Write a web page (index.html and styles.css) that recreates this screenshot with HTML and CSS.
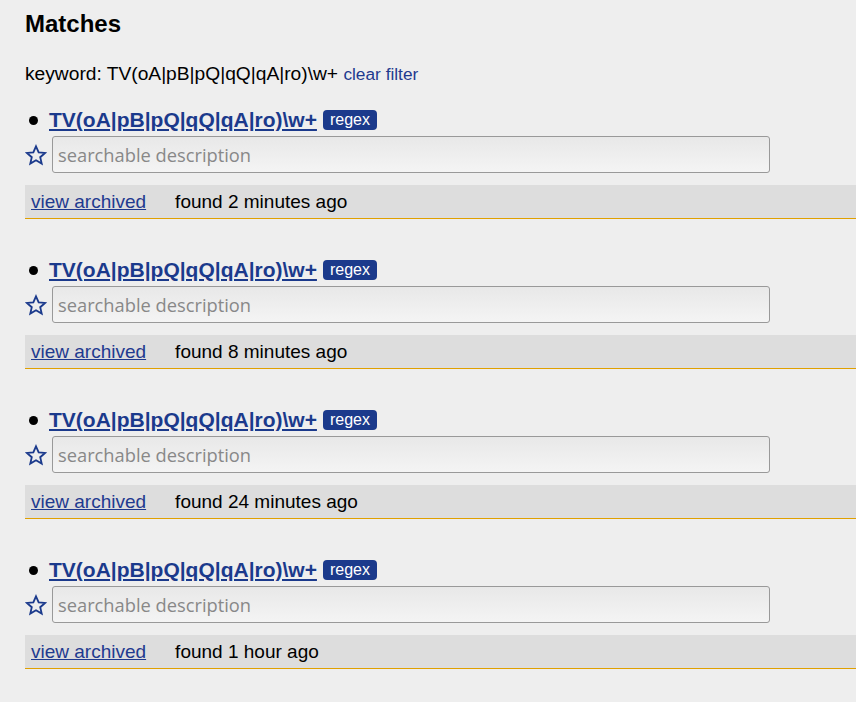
FILE: index.html
```html
<!DOCTYPE html>
<html>
<head>
<meta charset="utf-8">
<link rel="stylesheet" href="styles.css">
</head>
<body>
<div class="page">
  <h1 class="title">Matches</h1>
  <p class="filter">keyword: TV(oA|pB|pQ|qQ|qA|ro)\w+ <a class="clear" href="#">clear filter</a></p>

  <div class="match">
    <div class="head"><span class="dot"></span><a class="name" href="#">TV(oA|pB|pQ|qQ|qA|ro)\w+</a><span class="badge">regex</span></div>
    <div class="desc-row">
      <svg class="star" viewBox="0 0 24 24" width="22" height="22"><path d="M12 2.5l2.9 6.6 7.1.6-5.4 4.7 1.6 7-6.2-3.7-6.2 3.7 1.6-7L2 9.7l7.1-.6z" fill="none" stroke="#1b3a8c" stroke-width="2" stroke-linejoin="miter"/></svg>
      <input class="desc" type="text" placeholder="searchable description">
    </div>
    <div class="bar"><a class="archived" href="#">view archived</a><span class="found">found 2 minutes ago</span></div>
  </div>

  <div class="match">
    <div class="head"><span class="dot"></span><a class="name" href="#">TV(oA|pB|pQ|qQ|qA|ro)\w+</a><span class="badge">regex</span></div>
    <div class="desc-row">
      <svg class="star" viewBox="0 0 24 24" width="22" height="22"><path d="M12 2.5l2.9 6.6 7.1.6-5.4 4.7 1.6 7-6.2-3.7-6.2 3.7 1.6-7L2 9.7l7.1-.6z" fill="none" stroke="#1b3a8c" stroke-width="2" stroke-linejoin="miter"/></svg>
      <input class="desc" type="text" placeholder="searchable description">
    </div>
    <div class="bar"><a class="archived" href="#">view archived</a><span class="found">found 8 minutes ago</span></div>
  </div>

  <div class="match">
    <div class="head"><span class="dot"></span><a class="name" href="#">TV(oA|pB|pQ|qQ|qA|ro)\w+</a><span class="badge">regex</span></div>
    <div class="desc-row">
      <svg class="star" viewBox="0 0 24 24" width="22" height="22"><path d="M12 2.5l2.9 6.6 7.1.6-5.4 4.7 1.6 7-6.2-3.7-6.2 3.7 1.6-7L2 9.7l7.1-.6z" fill="none" stroke="#1b3a8c" stroke-width="2" stroke-linejoin="miter"/></svg>
      <input class="desc" type="text" placeholder="searchable description">
    </div>
    <div class="bar"><a class="archived" href="#">view archived</a><span class="found">found 24 minutes ago</span></div>
  </div>

  <div class="match">
    <div class="head"><span class="dot"></span><a class="name" href="#">TV(oA|pB|pQ|qQ|qA|ro)\w+</a><span class="badge">regex</span></div>
    <div class="desc-row">
      <svg class="star" viewBox="0 0 24 24" width="22" height="22"><path d="M12 2.5l2.9 6.6 7.1.6-5.4 4.7 1.6 7-6.2-3.7-6.2 3.7 1.6-7L2 9.7l7.1-.6z" fill="none" stroke="#1b3a8c" stroke-width="2" stroke-linejoin="miter"/></svg>
      <input class="desc" type="text" placeholder="searchable description">
    </div>
    <div class="bar"><a class="archived" href="#">view archived</a><span class="found">found 1 hour ago</span></div>
  </div>
</div>
</body>
</html>
```

FILE: styles.css
```css
html, body {
  margin: 0;
  padding: 0;
  background: #eeeeee;
}
body {
  font-family: "Liberation Sans", Arial, sans-serif;
  color: #000;
}
.page {
  padding: 10px 0 0 25px;
}
.title {
  margin: 0;
  font-size: 24px;
  font-weight: bold;
  line-height: 28px;
}
.filter {
  margin: 25px 0 0 0;
  font-size: 19.2px;
  line-height: 22px;
}
.clear {
  color: #1f3a8f;
  text-decoration: none;
  font-size: 17.3px;
}
.match {
  margin-top: 22px;
  margin-bottom: 38px;
}
.head {
  display: flex;
  align-items: center;
  height: 26px;
}
.dot {
  width: 9px;
  height: 9px;
  border-radius: 50%;
  background: #000;
  margin: 0 11px 0 4px;
}
.name {
  font-size: 21px;
  font-weight: bold;
  color: #1b3a8c;
  text-decoration: underline;
}
.badge {
  margin-left: 6px;
  background: #1b3a8c;
  color: #fff;
  font-size: 16px;
  line-height: 20px;
  padding: 0 7px;
  border-radius: 4px;
}
.desc-row {
  display: flex;
  align-items: center;
  margin-top: 3px;
}
.star {
  display: block;
  margin-right: 5px;
}
.desc {
  width: 718px;
  height: 37px;
  box-sizing: border-box;
  border: 1px solid #999;
  border-radius: 3px;
  background: linear-gradient(#e8e8e8, #f4f4f4);
  font-family: "Open Sans", sans-serif;
  font-size: 18.3px;
  padding: 0 5px;
  color: #333;
}
.desc::placeholder {
  color: #888;
}
.bar {
  margin-top: 12px;
  background: #dddddd;
  border-bottom: 1px solid #e0a000;
  height: 32px;
  padding-top: 1px;
  display: flex;
  align-items: center;
  font-size: 19px;
}
.archived {
  color: #1f3a8f;
  margin-left: 6px;
  text-decoration: underline;
}
.found {
  margin-left: 29px;
}
```
